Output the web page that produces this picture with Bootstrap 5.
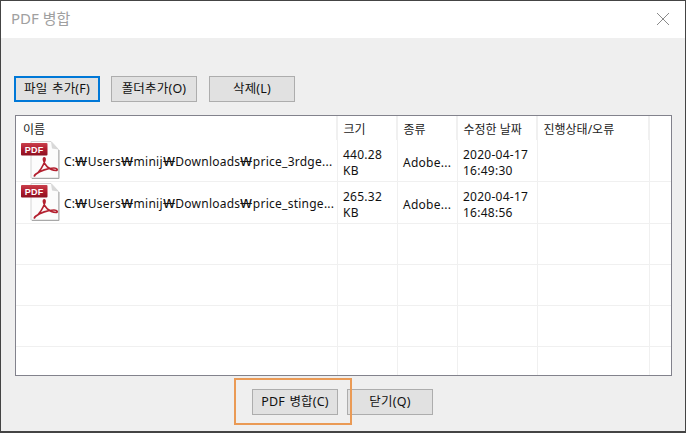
<!DOCTYPE html>
<html lang="ko">
<head>
  <meta charset="UTF-8">
  <title>PDF 병합</title>
  <link href="https://cdn.jsdelivr.net/npm/bootstrap@5.3.3/dist/css/bootstrap.min.css" rel="stylesheet">
  <style>
    html, body { height: 433px; overflow: hidden; }
    body {
      font-family: "Noto Sans", "Noto Sans CJK KR", sans-serif;
      font-size: 12px;
      color: #111;
      background: #f0f0f0;
    }
    .win {
      width: 686px;
      height: 433px;
      border: 1px solid #444;
      border-bottom-width: 2px;
      background: #efefef;
    }
    .win-title {
      height: 37px;
      background: #fff;
      padding: 0 10px 2px 10px;
      color: #a0a0a0;
      font-size: 15px;
    }
    .win-title svg { margin-right: 5px; }
    .win-body { padding: 38px 14px 0 13px; }
    .tool-btn {
      width: 86px;
      height: 26px;
      border: 1px solid #adadad;
      border-radius: 0;
      background: #e1e1e1;
      color: #111;
      font-size: 12.5px;
      letter-spacing: .2px;
      word-spacing: 1px;
      padding: 0;
      line-height: 1;
    }
    .tool-btn.is-default { border: 2px solid #0078d7; }
    .btn-gap-a { margin-left: 11px; }
    .btn-gap-b { margin-left: 12px; }
    .file-box {
      width: 657px;
      height: 261px;
      margin: 13px 0 0 1px;
      border: 1px solid #82828c;
      background: #fff;
      overflow: hidden;
    }
    .file-table { table-layout: fixed; width: 655px; border-collapse: collapse; }
    .file-table th, .file-table td {
      border-right: 1px solid #f0f0f0;
      padding: 0 5px 0 5.5px;
      font-weight: 400;
      overflow: hidden;
    }
    .file-table th {
      height: 24px;
      padding-top: 3px;
      color: #222;
      border-right: 2px solid #f0f0f0;
    }
    .file-table td {
      height: 41px;
      padding-top: 5px;
      border-bottom: 1px solid #f0f0f0;
      line-height: 16px;
      letter-spacing: .25px;
    }
    .file-table .last-row td { height: 30px; border-bottom: 0; }
    .file-table tr > :last-child { border-right: 0; }
    .c-name { width: 321px; }
    .c-size, .c-kind { width: 60px; }
    .c-date { width: 80px; }
    .c-state { width: 112px; }
    .c-rest { width: 22px; }
    .file-table .name-cell { white-space: nowrap; padding: 0 0 0 3px; }
    .file-table th.name-cell { padding: 3px 0 0 7px; }
    .name-cell span { overflow: hidden; padding-top: 2px; }
    .won { display: inline-block; width: 12.5px; text-align: center; transform: scaleX(1.5); }
    .pdf-ico { flex: none; width: 41px; height: 41px; }
    .foot-row { margin-top: 13px; padding-left: 238px; gap: 9px; }
    .mark-box {
      position: absolute;
      left: 233px;
      top: 377px;
      width: 118px;
      height: 47px;
      border: 2px solid #ea9a55;
      pointer-events: none;
    }
  </style>
</head>
<body>
  <svg width="0" height="0" class="position-absolute">
    <defs>
      <linearGradient id="redBand" x1="0" y1="0" x2="0" y2="1">
        <stop offset="0" stop-color="#c9404c"/>
        <stop offset=".5" stop-color="#b01c2e"/>
        <stop offset="1" stop-color="#8c1020"/>
      </linearGradient>
      <symbol id="pdfIcon" viewBox="0 0 41 41">
        <path d="M12 1.5H32L39.5 9.5V38H12Z" fill="#fcfcfc" stroke="#d4d4d4"/>
        <path d="M32 1.5L33 8.5L39.5 9.5Z" fill="#d8d8d8"/>
        <path d="M40 10V38.5H13" fill="none" stroke="#a8a8a8"/>
        <rect x="2" y="3" width="26.5" height="12.5" rx="1" fill="url(#redBand)"/>
        <text x="15.2" y="13" text-anchor="middle" font-family="Liberation Sans, sans-serif" font-size="9" font-weight="700" fill="#fff">PDF</text>
        <path d="M16 35C20 33 25 25 26 20C26.5 17 24 17 24.5 20C25 25 30 30 37 30.5C39 30.5 38.5 28 35 28C29 28 21 31 17 34C15 35.5 15 37 16 35Z" fill="none" stroke="#b3202f" stroke-width="1.7" stroke-linejoin="round"/>
      </symbol>
    </defs>
  </svg>

  <div class="win position-relative">
    <div class="win-title d-flex align-items-center justify-content-between">
      <span>PDF 병합</span>
      <svg width="14" height="14" viewBox="0 0 14 14"><path d="M1 1L13 13M13 1L1 13" stroke="#8a8a8a" stroke-width="1" fill="none"/></svg>
    </div>

    <div class="win-body">
      <div class="d-flex">
        <button type="button" class="btn tool-btn is-default">파일 추가(F)</button>
        <button type="button" class="btn tool-btn btn-gap-a">폴더추가(O)</button>
        <button type="button" class="btn tool-btn btn-gap-b">삭제(L)</button>
      </div>

      <div class="file-box">
        <table class="file-table">
          <colgroup>
            <col class="c-name"><col class="c-size"><col class="c-kind"><col class="c-date"><col class="c-state"><col class="c-rest">
          </colgroup>
          <thead>
            <tr><th class="name-cell">이름</th><th>크기</th><th>종류</th><th>수정한 날짜</th><th>진행상태/오류</th><th></th></tr>
          </thead>
          <tbody>
            <tr>
              <td class="name-cell"><div class="d-flex align-items-center gap-1"><svg class="pdf-ico"><use href="#pdfIcon"/></svg><span>C:<i class="won fst-normal">₩</i>Users<i class="won fst-normal">₩</i>minij<i class="won fst-normal">₩</i>Downloads<i class="won fst-normal">₩</i>price_3rdge...</span></div></td>
              <td>440.28 KB</td><td>Adobe...</td><td>2020-04-17 16:49:30</td><td></td><td></td>
            </tr>
            <tr>
              <td class="name-cell"><div class="d-flex align-items-center gap-1"><svg class="pdf-ico"><use href="#pdfIcon"/></svg><span>C:<i class="won fst-normal">₩</i>Users<i class="won fst-normal">₩</i>minij<i class="won fst-normal">₩</i>Downloads<i class="won fst-normal">₩</i>price_stinge...</span></div></td>
              <td>265.32 KB</td><td>Adobe...</td><td>2020-04-17 16:48:56</td><td></td><td></td>
            </tr>
            <tr><td></td><td></td><td></td><td></td><td></td><td></td></tr>
            <tr><td></td><td></td><td></td><td></td><td></td><td></td></tr>
            <tr><td></td><td></td><td></td><td></td><td></td><td></td></tr>
            <tr class="last-row"><td></td><td></td><td></td><td></td><td></td><td></td></tr>
          </tbody>
        </table>
      </div>

      <div class="d-flex foot-row">
        <button type="button" class="btn tool-btn">PDF 병합(C)</button>
        <button type="button" class="btn tool-btn">닫기(Q)</button>
      </div>
    </div>
    <div class="mark-box"></div>
  </div>
  <script src="https://cdn.jsdelivr.net/npm/bootstrap@5.3.3/dist/js/bootstrap.bundle.min.js"></script>
</body>
</html>
